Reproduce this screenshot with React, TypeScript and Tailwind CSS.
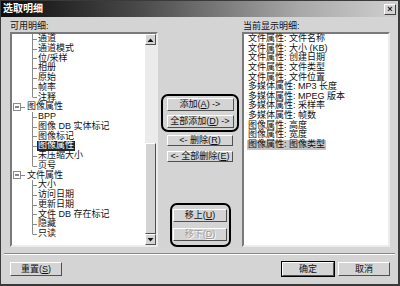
import React from 'react'

const leftRows: { text: string; kind: 'child' | 'parent'; last?: boolean; selected?: boolean }[] = [
  { text: '通道', kind: 'child' },
  { text: '通道模式', kind: 'child' },
  { text: '位/采样', kind: 'child' },
  { text: '相册', kind: 'child' },
  { text: '原始', kind: 'child' },
  { text: '帧率', kind: 'child' },
  { text: '注释', kind: 'child', last: true },
  { text: '图像属性', kind: 'parent' },
  { text: 'BPP', kind: 'child' },
  { text: '图像 DB 实体标记', kind: 'child' },
  { text: '图像标记', kind: 'child' },
  { text: '图像属性', kind: 'child', selected: true },
  { text: '未压缩大小', kind: 'child' },
  { text: '页号', kind: 'child', last: true },
  { text: '文件属性', kind: 'parent' },
  { text: '大小', kind: 'child' },
  { text: '访问日期', kind: 'child' },
  { text: '更新日期', kind: 'child' },
  { text: '文件 DB 存在标记', kind: 'child' },
  { text: '隐藏', kind: 'child' },
  { text: '只读', kind: 'child', last: true },
]

const rightRows = [
  '文件属性: 文件名称',
  '文件属性: 大小 (KB)',
  '文件属性: 创建日期',
  '文件属性: 文件类型',
  '文件属性: 文件位置',
  '多媒体属性: MP3 长度',
  '多媒体属性: MPEG 版本',
  '多媒体属性: 采样率',
  '多媒体属性: 帧数',
  '图像属性: 高度',
  '图像属性: 宽度',
  '图像属性: 图像类型',
]

function Btn({
  className,
  children,
  disabled,
  isDefault,
}: {
  className: string
  children: React.ReactNode
  disabled?: boolean
  isDefault?: boolean
}) {
  return (
    <div
      className={`${className} flex items-center justify-center bg-[#d4d4d4] border border-t-white border-l-white border-r-[#505050] border-b-[#505050] ${
        isDefault ? 'outline outline-1 outline-black' : ''
      } ${disabled ? 'text-[#9a9a9a] [text-shadow:1px_1px_0_#fff]' : 'text-[#111]'} whitespace-nowrap leading-none`}
    >
      {children}
    </div>
  )
}

function TreeRow({ text, kind, last, selected }: (typeof leftRows)[number]) {
  return (
    <div className="flex items-center h-[9.75px]">
      {kind === 'child' ? (
        <svg width="25" height="10" className="shrink-0">
          <line x1="20.5" y1="0" x2="20.5" y2={last ? 5 : 10} stroke="#8a8a8a" />
          <line x1="20.5" y1="5.5" x2="25" y2="5.5" stroke="#8a8a8a" />
        </svg>
      ) : (
        <svg width="14" height="10" className="shrink-0">
          <rect x="1.5" y="1.5" width="7" height="7" fill="#fff" stroke="#8a8a8a" />
          <line x1="3" y1="5" x2="7" y2="5" stroke="#111" />
          <line x1="9" y1="5.5" x2="13" y2="5.5" stroke="#8a8a8a" />
        </svg>
      )}
      <span
        className={`px-[1px] leading-[9.75px] whitespace-nowrap ${
          selected ? 'bg-[#262626] text-white' : 'text-[#111]'
        }`}
      >
        {text}
      </span>
    </div>
  )
}

function Arrow({ up }: { up?: boolean }) {
  return (
    <div className="h-[11px] flex items-center justify-center bg-[#d4d4d4] border border-t-white border-l-white border-r-[#505050] border-b-[#505050]">
      <svg width="7" height="4">
        {up ? <polygon points="0.5,4 3.5,0.5 6.5,4" fill="#111" /> : <polygon points="0.5,0 3.5,3.5 6.5,0" fill="#111" />}
      </svg>
    </div>
  )
}

export default function App() {
  return (
    <div className="w-[400px] h-[286px] bg-[#d4d4d4] border border-[#3a3a3a] border-r-2 border-b-2 flex flex-col overflow-hidden text-[9px] text-[#111] font-['Liberation_Sans','Noto_Sans_CJK_SC',sans-serif]">
      {/* title bar */}
      <div className="h-[16px] shrink-0 flex items-center justify-between pl-[2px] pr-[2px] bg-[linear-gradient(to_right,#0c0c0c,#4a4a4a_35%,#a8a8a8_75%,#cfcfcf)]">
        <span className="text-white font-bold text-[10px] leading-none">选取明细</span>
        <div className="w-[12px] h-[11px] flex items-center justify-center bg-[#d4d4d4] border border-t-white border-l-white border-r-[#404040] border-b-[#404040] text-[9px] font-bold leading-none">
          ×
        </div>
      </div>

      {/* labels */}
      <div className="mt-[4px] h-[10px] flex pl-[9px] leading-[10px]">
        <span className="w-[232px]">可用明细:</span>
        <span className="pl-[1px]">当前显示明细:</span>
      </div>

      {/* main row */}
      <div className="mt-[1px] h-[215px] shrink-0 flex pl-[9px]">
        <div className="w-[148px] flex bg-white border-2 border-t-[#7a7a7a] border-l-[#7a7a7a] border-r-[#ececec] border-b-[#ececec]">
          <div className="flex-1 flex flex-col">
            {leftRows.map((r, i) => (
              <TreeRow key={i} {...r} />
            ))}
          </div>
          <div className="w-[11px] flex flex-col">
            <Arrow up />
            <div className="flex-1 flex flex-col justify-end bg-[#ebebeb]">
              <div className="h-[91px] bg-[#d4d4d4] border border-t-white border-l-white border-r-[#505050] border-b-[#505050]" />
            </div>
            <Arrow />
          </div>
        </div>

        <div className="w-[84px] flex flex-col items-center">
          <div className="mt-[62px] w-[78px] border-2 border-black rounded-[7px] pt-[2px] pb-[2px] flex flex-col items-center gap-[4px]">
            <Btn className="w-[67px] h-[13px]">
              添加(<span className="underline">A</span>) -&gt;
            </Btn>
            <Btn className="w-[67px] h-[13px]">
              全部添加(<span className="underline">D</span>) -&gt;
            </Btn>
          </div>
          <Btn className="mt-[3px] w-[66px] h-[13px]">
            &lt;- 删除(<span className="underline">R</span>)
          </Btn>
          <Btn className="mt-[5px] w-[66px] h-[13px]">
            &lt;- 全部删除(<span className="underline">E</span>)
          </Btn>
          <div className="mt-[41px] w-[61px] border-2 border-black rounded-[7px] pt-[4px] pb-[4px] flex flex-col items-center gap-[6px]">
            <Btn className="w-[54px] h-[13px]">
              移上(<span className="underline">U</span>)
            </Btn>
            <Btn className="w-[54px] h-[13px]" disabled>
              移下(<span className="underline">D</span>)
            </Btn>
          </div>
        </div>

        <div className="w-[148px] bg-white border-2 border-t-[#7a7a7a] border-l-[#7a7a7a] border-r-[#ececec] border-b-[#ececec] pl-[3px] flex flex-col items-start">
          {rightRows.map((t, i) => (
            <span
              key={i}
              className={`h-[9.65px] leading-[9.65px] px-[1px] whitespace-nowrap ${
                i === rightRows.length - 1 ? 'bg-[#c4c4c4]' : ''
              }`}
            >
              {t}
            </span>
          ))}
        </div>
      </div>

      {/* separator */}
      <div className="mt-[6px] mx-[3px] h-[2px] border-t border-t-[#8a8a8a] border-b border-b-white" />

      {/* bottom buttons */}
      <div className="mt-[7px] flex pl-[9px] pr-[8px]">
        <Btn className="w-[52px] h-[14px]">
          重置(<span className="underline">S</span>)
        </Btn>
        <div className="flex-1" />
        <div className="flex gap-[4px]">
          <Btn className="w-[52px] h-[14px]" isDefault>
            确定
          </Btn>
          <Btn className="w-[52px] h-[14px]">取消</Btn>
        </div>
      </div>
    </div>
  )
}
